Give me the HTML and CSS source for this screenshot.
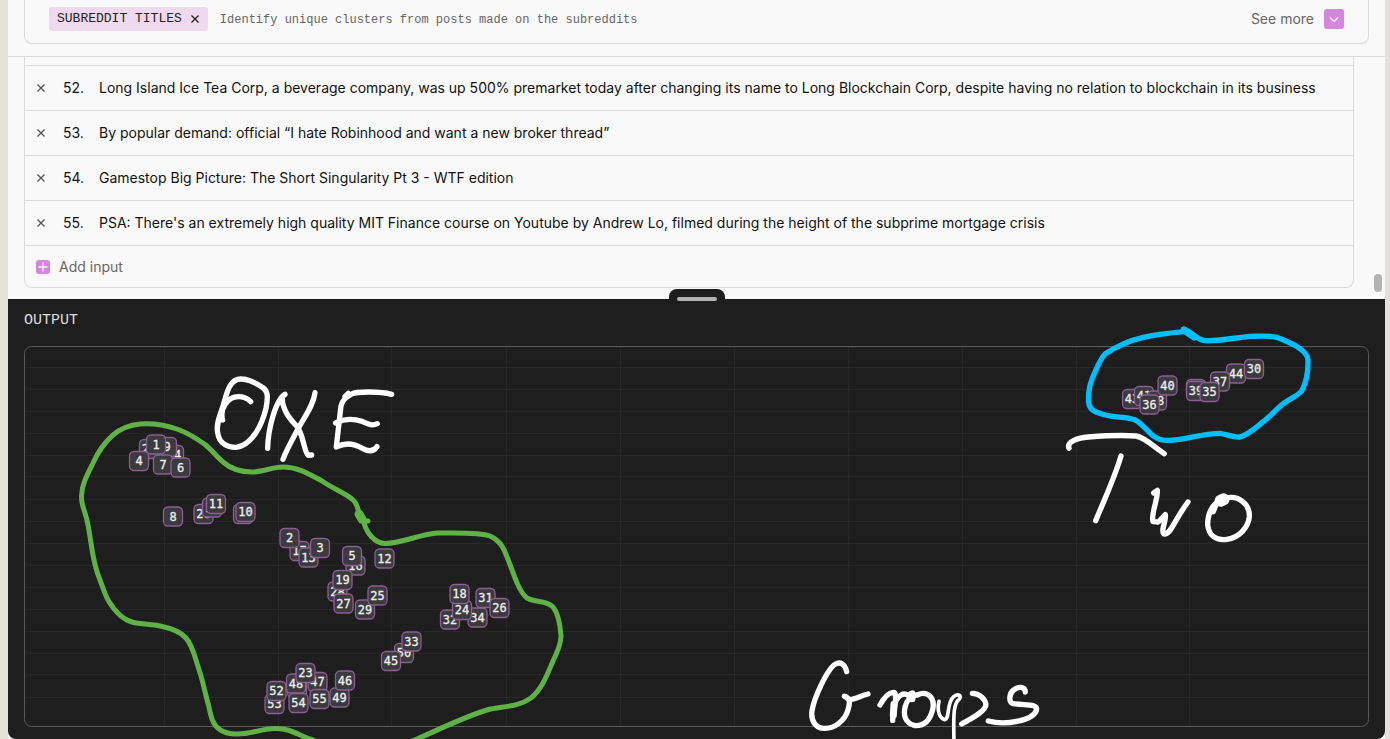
FILE: index.html
```html
<!DOCTYPE html>
<html lang="en">
<head>
<meta charset="utf-8">
<title>Subreddit titles</title>
<link rel="stylesheet" href="styles.css">
</head>
<body>
<main class="app">
  <header class="header">
    <div class="card">
      <button class="chip" type="button">SUBREDDIT TITLES
        <svg class="cross" viewBox="0 0 10 10" aria-hidden="true"><path d="M1.5 1.5l7 7M8.5 1.5l-7 7"/></svg>
      </button>
      <p class="description">Identify unique clusters from posts made on the subreddits</p>
      <button class="more" type="button">See more
        <svg class="more-icon" viewBox="0 0 20 20" aria-hidden="true"><rect width="20" height="20" rx="3"/><path d="M6 8.5l4 4 4-4"/></svg>
      </button>
    </div>
  </header>

  <section class="inputs" aria-label="Inputs">
    <div class="list">
      <ul class="rows">
        <li class="row"><button class="remove" type="button" aria-label="Remove 52"><svg class="cross" viewBox="0 0 10 10"><path d="M1.5 1.5l7 7M8.5 1.5l-7 7"/></svg></button><span class="number">52.</span><span>Long Island Ice Tea Corp, a beverage company, was up 500% premarket today after changing its name to Long Blockchain Corp, despite having no relation to blockchain in its business</span></li>
        <li class="row"><button class="remove" type="button" aria-label="Remove 53"><svg class="cross" viewBox="0 0 10 10"><path d="M1.5 1.5l7 7M8.5 1.5l-7 7"/></svg></button><span class="number">53.</span><span>By popular demand: official “I hate Robinhood and want a new broker thread”</span></li>
        <li class="row"><button class="remove" type="button" aria-label="Remove 54"><svg class="cross" viewBox="0 0 10 10"><path d="M1.5 1.5l7 7M8.5 1.5l-7 7"/></svg></button><span class="number">54.</span><span>Gamestop Big Picture: The Short Singularity Pt 3 - WTF edition</span></li>
        <li class="row"><button class="remove" type="button" aria-label="Remove 55"><svg class="cross" viewBox="0 0 10 10"><path d="M1.5 1.5l7 7M8.5 1.5l-7 7"/></svg></button><span class="number">55.</span><span>PSA: There's an extremely high quality MIT Finance course on Youtube by Andrew Lo, filmed during the height of the subprime mortgage crisis</span></li>
      </ul>
      <button class="add" type="button"><svg class="add-icon" viewBox="0 0 14 14" aria-hidden="true"><rect width="14" height="14" rx="3"/><path d="M7 2.5v9M2.5 7h9"/></svg>Add input</button>
    </div>
    <span class="scroll-thumb"></span>
    <button class="handle" type="button" aria-label="Resize output"><span class="grip"></span></button>
  </section>

  <section class="output">
    <h2 class="title">OUTPUT</h2>
    <svg class="plot" viewBox="24 346 1345 381" role="img" aria-label="Cluster plot">
      <defs><rect id="n" class="node" x="-9.5" y="-9.5" width="19" height="19" rx="4.5"/></defs>
      <path class="grid" d="M164.5 347v379M278.5 347v379M391.5 347v379M506.5 347v379M620.5 347v379M734.5 347v379M848.5 347v379M962.5 347v379M1076.5 347v379M1189.5 347v379M26 367.5h1342M26 389.5h1342M26 411.5h1342M26 433.5h1342M26 455.5h1342M26 476.5h1342M26 499.5h1342M26 521.5h1342M26 543.5h1342M26 565.5h1342M26 587.5h1342M26 609.5h1342M26 631.5h1342M26 653.5h1342M26 674.5h1342M26 697.5h1342"/>
      <rect class="frame" x="24.5" y="346.5" width="1344" height="380" rx="7"/>
      <g class="nodes">
        <g transform="translate(149 449)"><use href="#n"/><text y="4">22</text></g>
        <g transform="translate(174 455)"><use href="#n"/><text y="4">14</text></g>
        <g transform="translate(167 447)"><use href="#n"/><text y="4">9</text></g>
        <g transform="translate(156 444.5)"><use href="#n"/><text y="4">1</text></g>
        <g transform="translate(139 461)"><use href="#n"/><text y="4">4</text></g>
        <g transform="translate(163 464.5)"><use href="#n"/><text y="4">7</text></g>
        <g transform="translate(180.5 467.5)"><use href="#n"/><text y="4">6</text></g>
        <g transform="translate(173 516.5)"><use href="#n"/><text y="4">8</text></g>
        <g transform="translate(203.5 514)"><use href="#n"/><text y="4">20</text></g>
        <g transform="translate(212 507.5)"><use href="#n"/><text y="4">15</text></g>
        <g transform="translate(216 504)"><use href="#n"/><text y="4">11</text></g>
        <g transform="translate(243 514)"><use href="#n"/></g>
        <g transform="translate(245.5 512)"><use href="#n"/><text y="4">10</text></g>
        <g transform="translate(299.5 551)"><use href="#n"/><text y="4">17</text></g>
        <g transform="translate(289.5 538)"><use href="#n"/><text y="4">2</text></g>
        <g transform="translate(308.5 557.5)"><use href="#n"/><text y="4">13</text></g>
        <g transform="translate(320 548)"><use href="#n"/><text y="4">3</text></g>
        <g transform="translate(355.5 565.5)"><use href="#n"/><text y="4">16</text></g>
        <g transform="translate(352 556)"><use href="#n"/><text y="4">5</text></g>
        <g transform="translate(384.5 558.5)"><use href="#n"/><text y="4">12</text></g>
        <g transform="translate(337.5 591.5)"><use href="#n"/><text y="4">28</text></g>
        <g transform="translate(342.5 580)"><use href="#n"/><text y="4">19</text></g>
        <g transform="translate(343.5 603.5)"><use href="#n"/><text y="4">27</text></g>
        <g transform="translate(365 609.5)"><use href="#n"/><text y="4">29</text></g>
        <g transform="translate(377.5 595.5)"><use href="#n"/><text y="4">25</text></g>
        <g transform="translate(450 619.5)"><use href="#n"/><text y="4">32</text></g>
        <g transform="translate(477.5 617.5)"><use href="#n"/><text y="4">34</text></g>
        <g transform="translate(462 610)"><use href="#n"/><text y="4">24</text></g>
        <g transform="translate(459.5 594)"><use href="#n"/><text y="4">18</text></g>
        <g transform="translate(485.5 598)"><use href="#n"/><text y="4">31</text></g>
        <g transform="translate(499.5 608)"><use href="#n"/><text y="4">26</text></g>
        <g transform="translate(404 653)"><use href="#n"/><text y="4">50</text></g>
        <g transform="translate(411.5 641.5)"><use href="#n"/><text y="4">33</text></g>
        <g transform="translate(391 661)"><use href="#n"/><text y="4">45</text></g>
        <g transform="translate(297 688)"><use href="#n"/></g>
        <g transform="translate(296 683.5)"><use href="#n"/><text y="4">48</text></g>
        <g transform="translate(317.5 682)"><use href="#n"/><text y="4">47</text></g>
        <g transform="translate(305.5 673)"><use href="#n"/><text y="4">23</text></g>
        <g transform="translate(274.5 704)"><use href="#n"/><text y="4">53</text></g>
        <g transform="translate(276.5 691)"><use href="#n"/><text y="4">52</text></g>
        <g transform="translate(298.5 703)"><use href="#n"/><text y="4">54</text></g>
        <g transform="translate(339.5 697.5)"><use href="#n"/><text y="4">49</text></g>
        <g transform="translate(319.5 699)"><use href="#n"/><text y="4">55</text></g>
        <g transform="translate(345 680.5)"><use href="#n"/><text y="4">46</text></g>
        <g transform="translate(1132 399)"><use href="#n"/><text y="4">43</text></g>
        <g transform="translate(1144 396)"><use href="#n"/><text y="4">41</text></g>
        <g transform="translate(1157 400.5)"><use href="#n"/><text y="4">38</text></g>
        <g transform="translate(1149.5 404.5)"><use href="#n"/><text y="4">36</text></g>
        <g transform="translate(1167.5 385.5)"><use href="#n"/><text y="4">40</text></g>
        <g transform="translate(1196 389)"><use href="#n"/></g>
        <g transform="translate(1196 391)"><use href="#n"/><text y="4">39</text></g>
        <g transform="translate(1236 373.5)"><use href="#n"/><text y="4">44</text></g>
        <g transform="translate(1220 381.5)"><use href="#n"/><text y="4">37</text></g>
        <g transform="translate(1209.5 392)"><use href="#n"/><text y="4">35</text></g>
        <g transform="translate(1254 369)"><use href="#n"/><text y="4">30</text></g>
      </g>
      <path class="ink green" d="M361 516C357 512 359 504 352 499C345 493 332 488 322 481C309 474 298 467 283 467C272 467 263 472 252 472C240 472 231 469 223 462C217 457 212 450 205 444.5C196 438 188 433 177 429C165 425 153 423 140 424C129 425 120 429 113 435C104 443 98 452 93 463C87 475 82 484 81.5 496C81 506 86 512 88 525C92 545 92 562 100 580C103 588 105 594 108 600C114 610 121 619 132 622C141 624.5 151 624 160 626C170 628 180 631 186 638C193 646 195 658 198.5 668C203 681 205 693 208.5 705C211 716 212 724 219 729C224 733 231 734 237 734C252 734 260 729 275 728.5C291 728 299 736 313 740C345 752 390 750 417 739C440 729 464 717 487 710C500 706 517 708 531 698C542 689 547 675 553 661C558 651 561 644 561 636C560 623 558 613 553 607C547 600 536 603 527 598C518 591 513 571 507 557C503 546 499 540 490 536C480 532 457 533 438 533C420 534 403 543 385 543.5C374 543 367 533 364 523"/>
      <path class="ink green blob" d="M359 514l3 5"/>
      <path class="ink green" d="M361 521h7"/>
      <g transform="translate(1050 310) scale(.3333)">
        <path class="mark blue" d="M400 65C360 69 315 74 280 82C240 91 195 112 165 132C148 150 137 183 127 205C115 232 114 265 117 283C122 303 143 309 165 315C195 323 235 320 255 330C285 343 302 389 345 391C395 394 450 370 510 370C530 372 548 384 570 381C595 374 615 355 640 335C665 316 678 298 700 281C725 263 743 258 756 242C768 218 775 185 774 150C772 118 715 95 680 82C658 76 625 79 600 79C560 82 510 94 465 92C435 88 425 62 400 58"/>
        <path class="mark blue thick" d="M402 60l31 21"/>
      </g>
      <g transform="translate(1050 310) scale(.3333)">
        <path class="mark" d="M57 415C49 395 85 383 115 381C155 378 220 375 258 378C285 382 315 413 343 431M213 438C195 500 165 565 137 632M311 549L322 541C324 570 302 612 309 635L325 636L346 614C350 630 331 662 342 672C362 675 370 635 414 576M525 565C565 554 600 582 598 620C595 650 570 683 531 688C495 693 477 675 473 645C473 620 480 595 500 578L490 605"/>
        <path class="mark thicker" d="M512 572l9-4"/>
      </g>
      <g transform="translate(200 360) scale(.3333)">
        <path class="mark" d="M68 180C58 145 84 110 115 110Q137 110 152 125M125 57C90 55 81 95 70 135C60 165 48 192 53 218C57 249 80 262 108 262C155 258 186 195 198 145C206 105 201 92 190 84C170 70 150 58 125 57M203 265C204 210 226 120 255 103M247 110C244 155 282 188 295 205C312 235 313 278 325 286L335 285M345 98C341 135 314 170 295 205C278 237 260 268 249 298M575 103C540 94 470 94 455 102C438 112 427 120 423 138L409 260M445 100L435 110M407 189C435 175 460 175 485 184C504 192 516 199 532 191M409 261C440 245 465 252 487 265C505 275 520 276 531 260"/>
      </g>
      <g transform="translate(780 640) scale(.3333)">
        <path class="mark" d="M200 95C195 70 180 66 169 71C142 83 101 178 96 213C92 243 107 263 130 265C165 268 195 240 204 210C210 190 212 173 193 169M197 170C210 190 235 168 264 162M300 195C313 171 326 156 342 157C355 169 339 213 338 241M345 190C355 164 371 157 384 166L398 159M412 165C444 150 466 175 458 209C450 242 431 258 405 257C374 250 369 223 376 199C380 180 391 170 408 165M577 160C598 160 615 177 618 193C618 215 568 239 545 252M736 156C735 138 714 139 701 150C687 160 686 185 697 190C728 198 776 187 769 212C758 240 680 258 625 243"/>
        <path class="mark thick" d="M396 163v13M342 193l-2 33"/>
        <path class="mark thin" d="M477 184C470 215 480 235 494 239C510 237 499 189 521 170C535 159 546 167 538 177C518 193 521 235 522 310"/>
      </g>
    </svg>
  </section>
</main>
</body>
</html>
```

FILE: styles.css
```css
* { box-sizing: border-box; }
body {
  margin: 0;
  background: #e5e1d9;
  color: #111;
  font: 14px/20px Inter, "Liberation Sans", sans-serif;
  overflow: hidden;
}
button {
  border: 0;
  padding: 0;
  background: none;
  color: inherit;
  font: inherit;
  cursor: pointer;
}
svg { display: block; flex: none; }
.app { margin: 0 5px 0 8px; background: #f9f9f9; }
.header { padding: 0 16px 12px; border-bottom: 1px solid #dadada; }
.card {
  display: flex;
  align-items: center;
  gap: 12px;
  padding: 7px 24px 12px;
  border: 1px solid #dadada;
  border-top: 0;
  border-radius: 0 0 8px 8px;
}
.chip {
  display: flex;
  align-items: center;
  gap: 8px;
  height: 24px;
  padding: 0 8px;
  border-radius: 3px;
  background: #efd9ef;
  color: #222;
  font: 13px/24px "Liberation Mono", monospace;
}
.cross { width: 10px; height: 10px; fill: none; stroke: currentColor; stroke-width: 1.3; }
.description { margin: 0; padding-top: 2px; color: #666; font: 12px/20px "Liberation Mono", monospace; }
.more { display: flex; gap: 10px; margin-left: auto; color: #666; }
.more-icon { width: 20px; height: 20px; fill: #d386dc; }
.more-icon path, .add-icon path { fill: none; stroke: #fbeffc; stroke-width: 1.3; }
.inputs { position: relative; padding: 0 31px 11px 16px; }
.list {
  padding-top: 8px;
  border: 1px solid #dadada;
  border-top: 0;
  border-radius: 0 0 8px 8px;
}
.rows { margin: 0; padding: 0; list-style: none; }
.row {
  display: flex;
  align-items: center;
  height: 45px;
  padding-left: 11px;
  border-top: 1px solid #dadada;
  white-space: nowrap;
}
.remove { color: #555; }
.number { flex: none; width: 36px; margin-left: 17px; }
.add {
  display: flex;
  align-items: center;
  gap: 9px;
  width: 100%;
  height: 42px;
  padding-left: 11px;
  border-top: 1px solid #dadada;
  color: #666;
}
.add-icon { width: 14px; height: 14px; fill: #d386dc; }
.scroll-thumb {
  position: absolute;
  right: 3px;
  bottom: 7px;
  width: 8px;
  height: 18px;
  border-radius: 4px;
  background: #b3b3b3;
}
.handle {
  position: absolute;
  bottom: 0;
  left: 50%;
  width: 56px;
  height: 10px;
  margin-left: -28px;
  border-radius: 8px 8px 0 0;
  background: #1e1e1e;
}
.grip {
  position: absolute;
  top: 8px;
  left: 8px;
  z-index: 1;
  width: 40px;
  height: 4px;
  border-radius: 2px;
  background: #b3b3b3;
}
.output {
  padding: 12px 16px;
  border-radius: 0 0 8px 8px;
  background: #1e1e1e;
  color: #ddd;
  overflow: hidden;
}
.title { margin: 0 0 15px; font: 15px/20px "Liberation Mono", monospace; }
.plot { width: 100%; height: auto; overflow: visible; }
.grid { stroke: #272727; stroke-width: 1; }
.frame { fill: none; stroke: #5a5a5a; }
.node { fill: #3b3a3c; stroke: #8b5f94; stroke-width: 1.3; }
.nodes text { fill: #eee; font: 12px "DejaVu Sans Mono", monospace; text-anchor: middle; stroke: #eee; stroke-width: .3; }
.ink, .mark { fill: none; stroke-linecap: round; stroke-linejoin: round; }
.ink { stroke-width: 5; }
.green { stroke: #5fb246; }
.blob { stroke-width: 9; }
.mark { stroke: #fff; stroke-width: 16; }
.blue { stroke: #00bfff; }
.thick { stroke-width: 21; }
.thicker { stroke-width: 36; }
.thin { stroke-width: 11; }
```
